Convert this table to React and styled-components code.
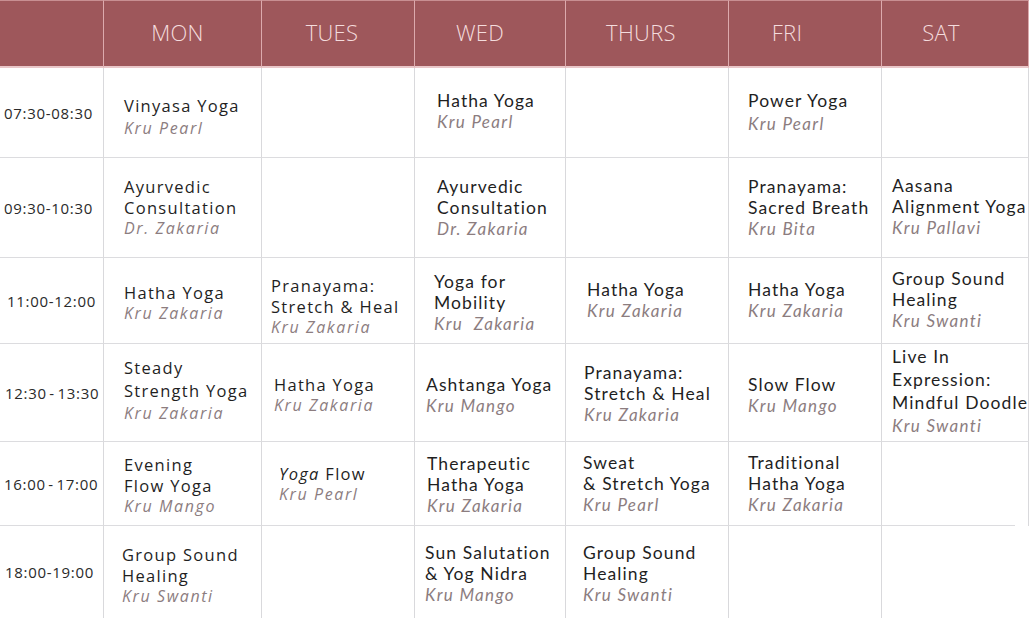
import React from "react";
import styled, { createGlobalStyle, css } from "styled-components";

const Global = createGlobalStyle`
  html, body { margin: 0; padding: 0; background: #ffffff; }
  body { width: 1029px; height: 618px; overflow: hidden; }
`;

const COLS = [104, 158, 153, 151, 163, 153, 147];
const ROWS = [68, 90, 100, 86, 98, 84, 92];

const Table = styled.div`
  display: grid;
  grid-template-columns: ${COLS.map((c) => c + "px").join(" ")};
  grid-template-rows: ${ROWS.map((r) => r + "px").join(" ")};
  width: 1029px;
  height: 618px;
  background: #ffffff;
`;

const HeadCell = styled.div`
  background: #9e575b;
  border-right: 1px solid #dcaaad;
  border-bottom: 2px solid #e9c7c9;
  border-top: 1px solid #c88f92;
  box-sizing: border-box;
  display: flex;
  align-items: center;
  justify-content: center;
  padding-bottom: 4px;
  padding-right: ${(p) => (p.$shift || 0) * 2}px;
  font-family: "Open Sans", "Liberation Sans", sans-serif;
  font-weight: 300;
  font-size: 22px;
  letter-spacing: 0.3px;
  color: #f4dcdd;
  &:last-child { border-right: none; }
`;

const TimeCell = styled.div`
  box-sizing: border-box;
  border-right: 1px solid #d9d9dc;
  border-bottom: ${(p) => (p.$last ? "none" : "1px solid #dcdcdf")};
  display: flex;
  align-items: center;
  padding-left: ${(p) => p.$pl}px;
  font-family: "Open Sans", "Liberation Sans", sans-serif;
  font-size: 15px;
  letter-spacing: 0.7px;
  word-spacing: -2px;
  color: #2a2a2a;
  white-space: nowrap;
`;

const Cell = styled.div`
  position: relative;
  box-sizing: border-box;
  border-right: 1px solid #d9d9dc;
  border-bottom: ${(p) => (p.$last || p.$shortLine ? "none" : "1px solid #dcdcdf")};
  display: flex;
  flex-direction: column;
  justify-content: center;
  padding-left: ${(p) => p.$pl || 0}px;
  padding-top: ${(p) => (p.$dy < 0 ? 0 : p.$dy * 2)}px;
  padding-bottom: ${(p) => (p.$dy < 0 ? -p.$dy * 2 : 0)}px;
  &:last-child { border-right: none; }
  ${(p) =>
    p.$shortLine &&
    css`
      &::after {
        content: "";
        position: absolute;
        left: 0;
        bottom: 0;
        width: 133px;
        height: 1px;
        background: #dcdcdf;
      }
    `}
`;

const Title = styled.div`
  color: #1f1f1f;
  white-space: nowrap;
  line-height: ${(p) => p.$lh || 21}px;
  ${(p) =>
    p.$alt
      ? css`
          font-family: "Lato", "Liberation Sans", sans-serif;
          font-size: 17.5px;
          letter-spacing: 1.1px;
        `
      : css`
          font-family: "Open Sans", "Liberation Sans", sans-serif;
          font-size: 16.5px;
          letter-spacing: 1.3px;
        `}
`;

const Name = styled.div`
  color: #8c7d7f;
  font-style: italic;
  white-space: nowrap;
  line-height: ${(p) => p.$lh || 21}px;
  ${(p) =>
    p.$alt
      ? css`
          font-family: "Lato", "Liberation Sans", sans-serif;
          font-size: 17px;
          letter-spacing: 1.3px;
        `
      : css`
          font-family: "Open Sans", "Liberation Sans", sans-serif;
          font-size: 16px;
          letter-spacing: 1.6px;
        `}
`;

const Em = styled.span`
  font-style: italic;
`;

const days = [
  ["MON", 5],
  ["TUES", 6],
  ["WED", 10],
  ["THURS", 6],
  ["FRI", 18],
  ["SAT", 14],
];

const c = (title, name, pl, opts = {}) => ({ title, name, pl, ...opts });

const rows = [
  {
    time: "07:30-08:30",
    tpl: 4,
    cells: [
      c(["Vinyasa Yoga"], "Kru Pearl", 20, { dy: 4, lh: 23 }),
      null,
      c(["Hatha Yoga"], "Kru Pearl", 22, { alt: true, dy: -2 }),
      null,
      c(["Power Yoga"], "Kru Pearl", 19, { alt: true, dy: -1, lh: 23 }),
      null,
    ],
  },
  {
    time: "09:30-10:30",
    tpl: 4,
    cells: [
      c(["Ayurvedic", "Consultation"], "Dr. Zakaria", 20, { dy: 0 }),
      null,
      c(["Ayurvedic", "Consultation"], "Dr. Zakaria", 22, { alt: true, dy: 0 }),
      null,
      c(["Pranayama:", "Sacred Breath"], "Kru Bita", 19, { alt: true, dy: 0 }),
      c(["Aasana", "Alignment Yoga"], "Kru Pallavi", 10, { alt: true, dy: -1 }),
    ],
  },
  {
    time: "11:00-12:00",
    tpl: 7,
    cells: [
      c(["Hatha Yoga"], "Kru Zakaria", 20, { dy: 2 }),
      c(["Pranayama:", "Stretch & Heal"], "Kru Zakaria", 9, { dy: 6 }),
      c(["Yoga for", "Mobility"], "Kru\u00a0\u00a0Zakaria", 19, { alt: true, dy: 2 }),
      c(["Hatha Yoga"], "Kru Zakaria", 21, { alt: true, dy: -1 }),
      c(["Hatha Yoga"], "Kru Zakaria", 19, { alt: true, dy: -1 }),
      c(["Group Sound", "Healing"], "Kru Swanti", 10, { alt: true, dy: -1 }),
    ],
  },
  {
    time: "12:30 - 13:30",
    tpl: 5,
    cells: [
      c(["Steady", "Strength Yoga"], "Kru Zakaria", 20, { dy: -2, lh: 23 }),
      c(["Hatha Yoga"], "Kru Zakaria", 12, { dy: 2 }),
      c(["Ashtanga Yoga"], "Kru Mango", 11, { alt: true, dy: 2 }),
      c(["Pranayama:", "Stretch & Heal"], "Kru Zakaria", 18, { alt: true, dy: 1 }),
      c(["Slow Flow"], "Kru Mango", 19, { alt: true, dy: 2 }),
      c(["Live In", "Expression:", "Mindful Doodle"], "Kru Swanti", 10, { alt: true, dy: -2, lh: 23 }),
    ],
  },
  {
    time: "16:00 - 17:00",
    tpl: 4,
    cells: [
      c(["Evening", "Flow Yoga"], "Kru Mango", 20, { dy: 2 }),
      c([<><Em>Yoga</Em> Flow</>], "Kru Pearl", 17, { dy: 0 }),
      c(["Therapeutic", "Hatha Yoga"], "Kru Zakaria", 12, { alt: true, dy: 1 }),
      c(["Sweat", "& Stretch Yoga"], "Kru Pearl", 17, { alt: true, dy: 0 }),
      c(["Traditional", "Hatha Yoga"], "Kru Zakaria", 19, { alt: true, dy: 0 }),
      { empty: true, shortLine: true },
    ],
  },
  {
    time: "18:00-19:00",
    tpl: 5,
    cells: [
      c(["Group Sound", "Healing"], "Kru Swanti", 18, { dy: 3 }),
      null,
      c(["Sun Salutation", "& Yog Nidra"], "Kru Mango", 10, { alt: true, dy: 1 }),
      c(["Group Sound", "Healing"], "Kru Swanti", 17, { alt: true, dy: 1 }),
      null,
      null,
    ],
  },
];

export default function App() {
  return (
    <>
      <Global />
      <Table>
        <HeadCell />
        {days.map(([d, s]) => (
          <HeadCell key={d} $shift={s}>
            {d}
          </HeadCell>
        ))}
        {rows.map((r, ri) => {
          const last = ri === rows.length - 1;
          return (
            <React.Fragment key={r.time}>
              <TimeCell $pl={r.tpl} $last={last}>
                {r.time}
              </TimeCell>
              {r.cells.map((cell, ci) =>
                cell && !cell.empty ? (
                  <Cell key={ci} $pl={cell.pl} $dy={cell.dy || 0} $last={last}>
                    {cell.title.map((t, ti) => (
                      <Title key={ti} $alt={cell.alt} $lh={cell.lh}>
                        {t}
                      </Title>
                    ))}
                    <Name $alt={cell.alt} $lh={cell.lh}>
                      {cell.name}
                    </Name>
                  </Cell>
                ) : (
                  <Cell key={ci} $last={last} $shortLine={cell && cell.shortLine} />
                )
              )}
            </React.Fragment>
          );
        })}
      </Table>
    </>
  );
}
